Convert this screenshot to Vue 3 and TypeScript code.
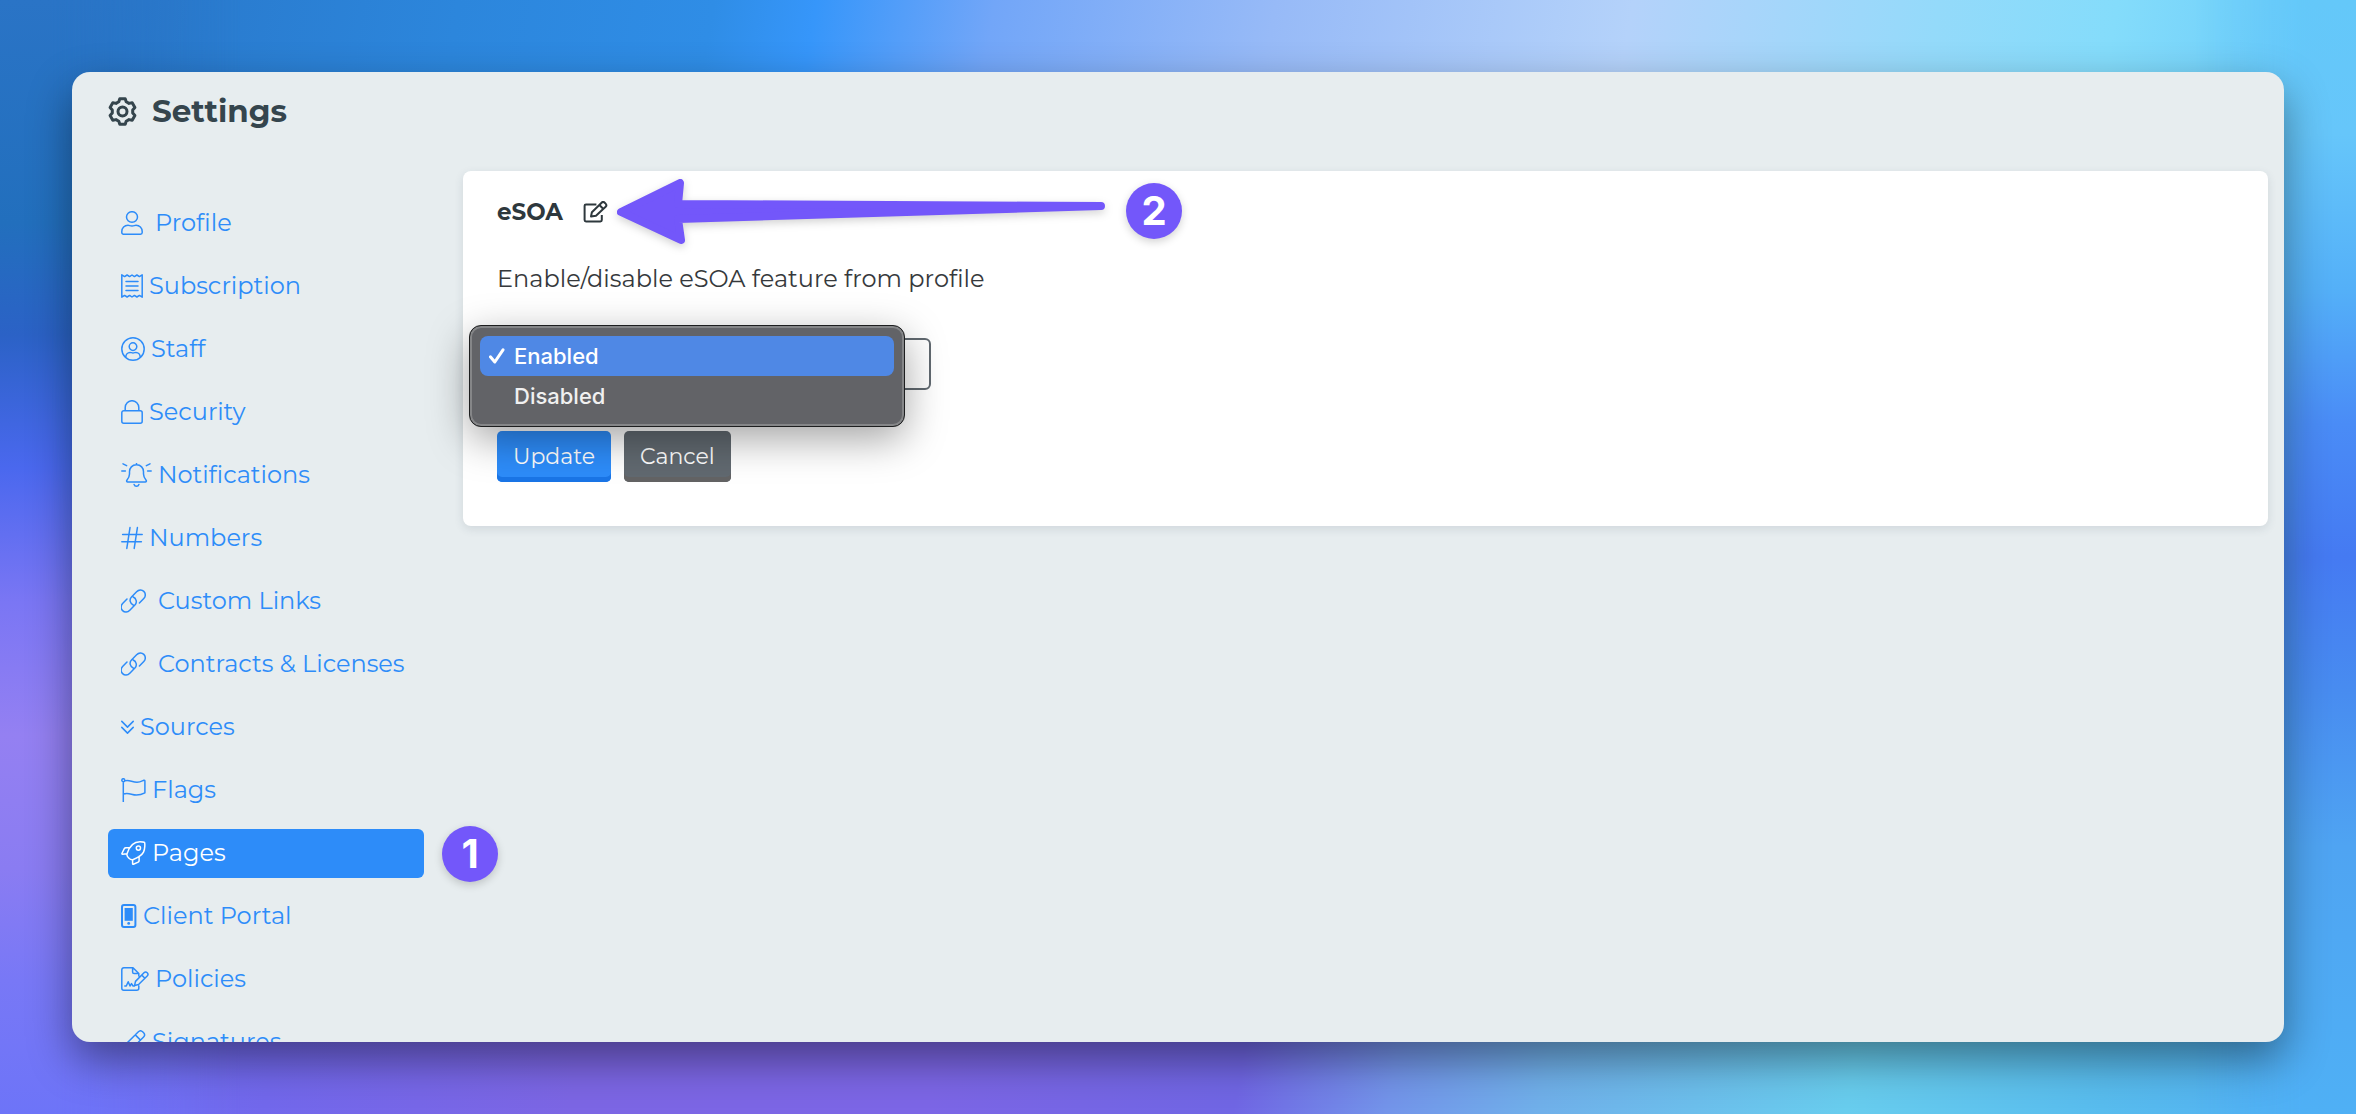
<script setup lang="ts">
import { ref } from 'vue'

interface NavItem {
  label: string
  icon: string
  width: number
  spaced?: boolean
  step?: number
}

const linkIcon =
  'M12.2 16C9 14.6 8 10.6 10.5 8L15.6 2.8C17.7.7 20.8.5 22.8 2.4 24.8 4.3 24.8 7.4 22.8 9.5L18.4 14M12.2 8C15.4 9.4 16.4 13.4 13.9 16L8.8 21.2C6.7 23.3 3.6 23.5 1.6 21.6-.4 19.7-.4 16.6 1.6 14.5L6 10'

const items: NavItem[] = [
  {
    label: 'Profile',
    width: 22,
    spaced: true,
    icon: 'M5.5 6a5.5 5.3 0 1 0 11 0a5.5 5.3 0 1 0-11 0M7 14.3C8.5 14.3 9 15 11 15s2.5-.7 4-.7C18.5 14.3 21.2 17 21.2 20.5v1a1.7 1.7 0 0 1-1.7 1.7H2.5a1.7 1.7 0 0 1-1.7-1.7v-1C.8 17 3.5 14.3 7 14.3Z',
  },
  {
    label: 'Subscription',
    width: 22,
    icon: 'M.8.8L3.6 2.6 6.1 1 8.6 2.6 11 1 13.4 2.6 15.9 1 18.4 2.6 21.2.8V23.2L18.4 21.4 15.9 23 13.4 21.4 11 23 8.6 21.4 6.1 23 3.6 21.4.8 23.2ZM5 7.4H17M5 12H17M5 16.6H17',
  },
  {
    label: 'Staff',
    width: 24,
    icon: 'M.8 12a11.2 11.2 0 1 0 22.4 0a11.2 11.2 0 1 0-22.4 0M8.2 9.6a3.8 3.8 0 1 0 7.6 0a3.8 3.8 0 1 0-7.6 0M4.8 20.2C4.8 17.2 6.8 15.4 9 15.4c1.2 0 1.6.5 3 .5s1.8-.5 3-.5c2.2 0 4.2 1.8 4.2 4.8',
  },
  {
    label: 'Security',
    width: 22,
    icon: 'M2.8 10.7H19.2a2 2 0 0 1 2 2V21.2a2 2 0 0 1-2 2H2.8a2 2 0 0 1-2-2V12.7a2 2 0 0 1 2-2ZM4.2 10.6V7.5a6.8 6.8 0 0 1 13.6 0V10.6',
  },
  {
    label: 'Notifications',
    width: 31,
    icon: 'M15.5.2V1.8M15.5 1.8C11.1 1.8 8.5 5 8.5 8.8V11c0 3-1.3 4.6-2.6 6.2-.6.8-.2 1.8.8 1.8h17.6c1 0 1.4-1 .8-1.8C23.8 15.6 22.5 14 22.5 11V8.8C22.5 5 19.9 1.8 15.5 1.8ZM13.1 21.5c.4 1.2 1.3 1.7 2.4 1.7s2-.5 2.4-1.7M.8 8H4.4M26.6 8H30.2M2 .8L5.6 2.6M29 .8L25.4 2.6',
  },
  {
    label: 'Numbers',
    width: 22,
    icon: 'M1.6 8.4H21.2M.8 15.8H20.4M9 1.6L5.8 22.4M16.4 1.6L13.2 22.4',
  },
  { label: 'Custom Links', width: 25, spaced: true, icon: linkIcon },
  { label: 'Contracts & Licenses', width: 25, spaced: true, icon: linkIcon },
  {
    label: 'Sources',
    width: 13,
    icon: 'M.8 6.4L6.5 12.1 12.2 6.4M.8 12.4L6.5 18.1 12.2 12.4',
  },
  {
    label: 'Flags',
    width: 25,
    icon: 'M.8 2.2a1.5 1.5 0 1 0 3 0a1.5 1.5 0 1 0-3 0M2.3 3.7V24M3.8 2.9C8 1.4 11 4.3 16 4.3C19 4.3 21 3.1 22.8 2.3Q23.9 2 23.9 3V14.8C20.5 16.6 18 17 15.4 17C10.4 17 8 14.2 2.3 16',
  },
  {
    label: 'Pages',
    width: 25,
    step: 1,
    icon: 'M6 12.7C8.5 5 12.5.8 19 .8C21.5.8 23 .9 23.5 1.3C24 2.2 24.1 8 22.5 11.2C20.5 15.2 16 17 11.6 18.8C9.5 19.2 5.2 15.6 6 12.7ZM8.8 6.8H4.9Q3.7 6.8 3.3 7.7L.9 12.5Q.8 13.3 1.5 13.2L5.9 12.8M18.1 15.3V19.8Q18.1 20.7 17.2 21.1L12.4 23.3Q11.6 23.4 11.6 22.7V18.8M15.3 7.1a2.1 2.1 0 1 0 4.2 0a2.1 2.1 0 1 0-4.2 0',
  },
  { label: 'Client Portal', width: 16, icon: 'phone' },
  {
    label: 'Policies',
    width: 28,
    icon: 'M17.8 9V6.5L12 .8H2.8a2 2 0 0 0-2 2V21.2a2 2 0 0 0 2 2H15.8a2 2 0 0 0 2-2V19M11.6.8V5a1.6 1.6 0 0 0 1.6 1.6H17.8M13.6 18.4l.9-4L23 5.8a2.2 2.2 0 0 1 3.2 3.2L17.6 17.5ZM20.8 8.1l3.1 3.1M3.8 19h1.5l1.9-4.2 1.8 4.2 1.5-2.4 1.6 2.4h1.5',
  },
  {
    label: 'Signatures',
    width: 25,
    icon: 'M17.4 1.8a3 3 0 0 1 4.2 0l1 1a3 3 0 0 1 0 4.2L8 21.5 1 23.2 2.7 16.3ZM14.3 4.9l5.2 5.2',
  },
]

const active = ref('Pages')
const feature = ref('Enabled')
const options = ['Enabled', 'Disabled']
</script>

<template>
  <div class="page">
    <main class="window">
      <header class="header">
        <svg class="gear" viewBox="-14.5 -14.5 29 29" aria-hidden="true">
          <path
            d="M-2.7-12.8H2.7L3.7-9.7 6.5-8.1 9.7-8.8 12.4-4.1 10.2-1.6V1.6L12.4 4.1 9.7 8.8 6.5 8.1 3.7 9.7 2.7 12.8H-2.7L-3.7 9.7-6.5 8.1-9.7 8.8-12.4 4.1-10.2 1.6V-1.6L-12.4-4.1-9.7-8.8-6.5-8.1-3.7-9.7Z"
          />
          <circle r="4.5" />
        </svg>
        <h1>Settings</h1>
      </header>

      <div class="body">
        <nav aria-label="Settings sections">
          <ul class="nav">
            <li v-for="item in items" :key="item.label">
              <a
                href="#"
                class="nav-link"
                :class="{ active: item.label === active, spaced: item.spaced }"
                @click.prevent="active = item.label"
              >
                <svg
                  class="nav-icon"
                  :width="item.width"
                  height="24"
                  :viewBox="`0 0 ${item.width} 24`"
                  aria-hidden="true"
                >
                  <template v-if="item.icon === 'phone'">
                    <rect class="phone-case" x="1" y="1" width="13.4" height="22" rx="2" />
                    <rect class="solid" x="3.6" y="4" width="8.2" height="12.8" />
                    <circle class="solid" cx="7.7" cy="19.4" r="1.4" />
                  </template>
                  <path v-else :d="item.icon" />
                </svg>
                <span>{{ item.label }}</span>
              </a>
              <span v-if="item.step" class="step step-nav">{{ item.step }}</span>
            </li>
          </ul>
        </nav>

        <section class="card">
          <div class="card-title">
            <h2>eSOA</h2>
            <button type="button" class="edit" aria-label="Edit eSOA">
              <svg width="25" height="22" viewBox="0 0 25 22" aria-hidden="true">
                <path
                  d="M13.4 3.4H3a1.4 1.4 0 0 0-1.4 1.4V19a1.4 1.4 0 0 0 1.4 1.4H17.4a1.4 1.4 0 0 0 1.4-1.4V14M8 15.4L8.9 11.2 18.6 1.7a2.2 2.2 0 0 1 3.1 0l.9.9a2.2 2.2 0 0 1 0 3.1L13 14.7ZM16.4 4l4 4"
                />
              </svg>
            </button>
            <svg class="arrow" width="500" height="80" viewBox="0 0 500 80" aria-hidden="true">
              <path d="M11 42L70 13 68 34 491 36 68 49 71 70Z" />
            </svg>
            <span class="step step-edit">2</span>
          </div>

          <label class="description" for="esoa">Enable/disable eSOA feature from profile</label>

          <div class="field">
            <select id="esoa" v-model="feature">
              <option v-for="option in options" :key="option">{{ option }}</option>
            </select>
            <ul class="menu" role="listbox" aria-label="eSOA">
              <li
                v-for="option in options"
                :key="option"
                role="option"
                :aria-selected="option === feature"
                :class="{ selected: option === feature }"
                @click="feature = option"
              >
                <svg width="16" height="16" viewBox="0 0 16 16" aria-hidden="true">
                  <path v-if="option === feature" d="M1.4 8.8L5.8 14 14 1.8" />
                </svg>
                <span>{{ option }}</span>
              </li>
            </ul>
          </div>

          <div class="actions">
            <button type="button" class="btn primary">Update</button>
            <button type="button" class="btn secondary">Cancel</button>
          </div>
        </section>
      </div>
    </main>
  </div>
</template>

<style>
body {
  margin: 0;
}
</style>

<style scoped>
.page {
  position: relative;
  box-sizing: border-box;
  height: 100vh;
  padding: 72px;
  overflow: hidden;
  font-family: Montserrat, Inter, 'Liberation Sans', sans-serif;
  font-size: 24px;
  background: linear-gradient(
    100deg,
    #2873c4 0%,
    #2c86dc 18%,
    #2f8de6 28%,
    #3696fa 32%,
    #72a6f8 39%,
    #97baf7 50%,
    #b4d2fa 64%,
    #94dafa 76%,
    #84dcfb 83%,
    #64c8f9 93%
  );
}

/* The lower half and the two sides of the wallpaper blend over the top band. */
.page::before,
.page::after {
  content: '';
  position: absolute;
  inset: 0;
}

.page::before {
  background: linear-gradient(
    100deg,
    #6d74f8 6%,
    #7268ec 18%,
    #7c66e4 30%,
    #7c66e6 44%,
    #7066e4 56%,
    #7394ea 62%,
    #70b0ea 68%,
    #68cdee 80%,
    #58bcee 90%,
    #4fadf3 100%
  );
  mask-image: linear-gradient(transparent 40%, #000 60%);
}

.page::after {
  background:
    linear-gradient(
        #2a74c6 0%,
        #226fbd 20%,
        #2b62c6 30%,
        #4a68ee 42%,
        #7a76f4 54%,
        #9480f2 66%,
        #8a7cf2 78%,
        #7878f6 88%,
        #6d74f8 100%
      )
      left / 50% 100% no-repeat,
    linear-gradient(
        #64c8f9 0%,
        #66c6fa 12%,
        #54b0f8 26%,
        #4a8cf6 38%,
        #457af2 50%,
        #488cf0 62%,
        #4fa4f2 76%,
        #4fb0f5 100%
      )
      right / 50% 100% no-repeat;
  mask-image: linear-gradient(
    90deg,
    #000 0,
    #000 50px,
    transparent 240px,
    transparent calc(100% - 160px),
    #000 calc(100% - 50px)
  );
}

.window {
  position: relative;
  z-index: 1;
  display: flex;
  flex-direction: column;
  height: 100%;
  overflow: hidden;
  border-radius: 18px;
  background: #e7edef;
  box-shadow: 0 18px 44px rgb(0 0 0 / 42%);
}

.header {
  display: flex;
  align-items: center;
  gap: 15px;
  padding: 19px 36px 20px;
  color: #35454d;
}

.header h1 {
  margin: 0;
  font-size: 31px;
  line-height: 40px;
  font-weight: 700;
}

.gear {
  width: 29px;
  height: 29px;
  fill: none;
  stroke: currentColor;
  stroke-width: 3;
  stroke-linejoin: round;
}

.body {
  display: grid;
  grid-template-columns: 316px minmax(0, 1fr);
  align-items: start;
  gap: 39px;
  flex: 1;
  min-height: 0;
  padding: 20px 16px 0 36px;
}

.nav {
  display: flex;
  flex-direction: column;
  gap: 14px;
  margin: 0;
  padding: 28px 0 0;
  list-style: none;
}

.nav li {
  position: relative;
}

.nav-link {
  display: flex;
  align-items: center;
  gap: 6px;
  height: 47px;
  padding: 0 13px 2px;
  border-radius: 6px;
  color: #2d8cf9;
  line-height: 47px;
  text-decoration: none;
  white-space: nowrap;
}

.nav-link.spaced {
  gap: 12px;
}

.nav-link.active {
  background: #2d8cf9;
  color: #fff;
}

.nav-icon {
  flex: none;
  fill: none;
  stroke: currentColor;
  stroke-width: 1.5;
  stroke-linecap: round;
  stroke-linejoin: round;
}

.phone-case {
  stroke-width: 2;
}

.solid {
  fill: currentColor;
  stroke: none;
}

.step {
  position: absolute;
  width: 56px;
  height: 56px;
  border-radius: 50%;
  background: #7357fa;
  box-shadow: 0 3px 8px rgb(0 0 0 / 18%);
  color: #fff;
  font-family: Inter, sans-serif;
  font-size: 40px;
  font-weight: 700;
  line-height: 56px;
  text-align: center;
}

.step-nav {
  top: -3px;
  left: calc(100% + 18px);
}

.step-edit {
  top: -16px;
  left: 629px;
}

.card {
  padding: 28px 34px 44px;
  border-radius: 8px;
  background: #fff;
  box-shadow: 0 3px 10px rgb(40 60 80 / 12%);
  color: #36393c;
}

.card-title {
  position: relative;
  display: flex;
  align-items: center;
  gap: 20px;
  height: 26px;
}

.card-title h2 {
  margin: 0;
  color: #2e383d;
  font-size: 23px;
  line-height: 26px;
  font-weight: 700;
}

.edit {
  display: flex;
  padding: 0;
  border: 0;
  background: none;
  color: #2e383d;
}

.edit path {
  fill: none;
  stroke: currentColor;
  stroke-width: 2;
  stroke-linejoin: round;
}

.arrow {
  position: absolute;
  top: -29px;
  left: 113px;
  filter: drop-shadow(0 3px 4px rgb(0 0 0 / 18%));
}

.arrow path {
  fill: #7357fa;
  stroke: #7357fa;
  stroke-width: 8;
  stroke-linejoin: round;
}

.description {
  display: block;
  margin-top: 36px;
  line-height: 36px;
}

.field {
  position: relative;
  width: 434px;
  margin-top: 41px;
}

.field select {
  display: block;
  width: 100%;
  height: 52px;
  padding: 0 16px;
  border: 2px solid #616970;
  border-radius: 6px;
  background: #fff;
  color: inherit;
  font: inherit;
  appearance: none;
}

.menu {
  position: absolute;
  top: -13px;
  left: -28px;
  box-sizing: border-box;
  width: 436px;
  height: 102px;
  margin: 0;
  padding: 8px;
  border: 1px solid #1d1e1f;
  border-radius: 12px;
  background: #626367;
  box-shadow:
    inset 0 0 0 2px #858688,
    0 12px 40px rgb(0 0 0 / 36%);
  color: #f0f0f0;
  font-family: Inter, sans-serif;
  font-size: 22px;
  font-weight: 500;
  list-style: none;
}

.menu li {
  display: flex;
  align-items: center;
  gap: 9px;
  height: 40px;
  margin: 0 2px;
  padding: 0 9px;
  border-radius: 8px;
}

.menu li:first-child {
  margin-top: 2px;
}

.menu .selected {
  background: #4f88e5;
  color: #fff;
}

.menu path {
  fill: none;
  stroke: currentColor;
  stroke-width: 3;
  stroke-linecap: round;
  stroke-linejoin: round;
}

.actions {
  display: flex;
  gap: 13px;
  margin-top: 41px;
}

.btn {
  height: 51px;
  padding: 0 16px;
  border: 0;
  border-radius: 5px;
  color: #fff;
  font-family: inherit;
  font-size: 22px;
  line-height: 51px;
}

.primary {
  background: #2d8cf9;
  box-shadow: inset 0 -5px #1a75e6;
}

.secondary {
  background: #616970;
  box-shadow: inset 0 -5px #636364;
}
</style>
